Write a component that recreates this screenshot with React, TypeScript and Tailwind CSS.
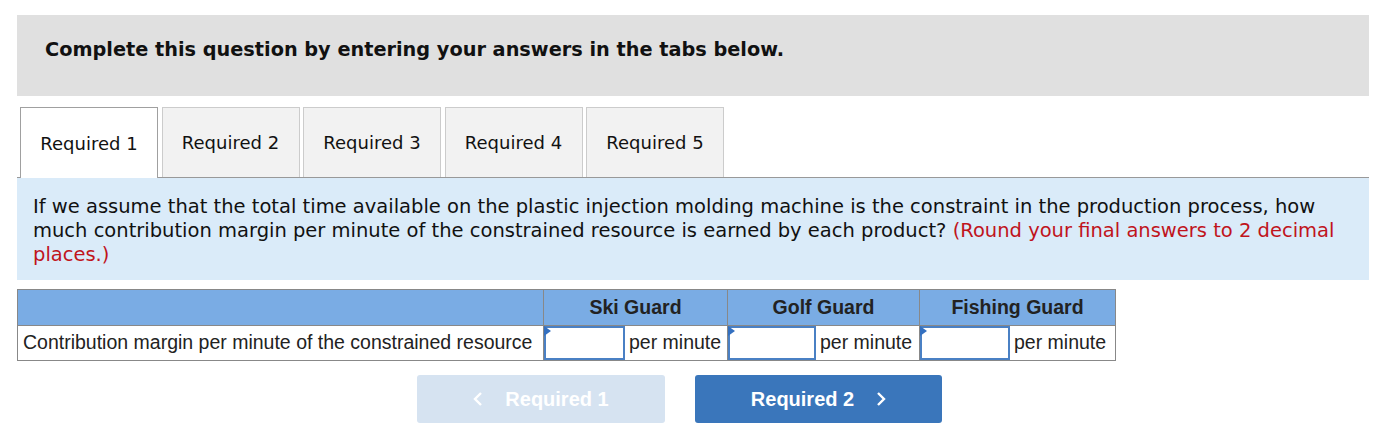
const verdana = { fontFamily: '"DejaVu Sans", Verdana, sans-serif' }

function Tab({ label, active }: { label: string; active?: boolean }) {
    return (
        <div
            className={
                active
                    ? 'w-[138px] h-[71px] flex items-center justify-center bg-white border border-b-0 border-[#a0a0a0] text-[18px] text-[#111] relative z-10 -mb-px'
                    : 'w-[138px] h-[70px] flex items-center justify-center bg-[#f2f2f2] border border-b-0 border-[#cccccc] text-[18px] text-[#111]'
            }
            style={verdana}
        >
            {label}
        </div>
    )
}

function AnswerInput({ width }: { width: string }) {
    return (
        <div className={`${width} h-[34px] relative border-2 border-[#4a80c4] bg-white`}>
            <div className="absolute -top-[2px] -left-[2px] w-[7px] h-[10px] bg-[#3470c0] [clip-path:polygon(0_0,100%_50%,0_100%)]" />
        </div>
    )
}

function Cell({ input }: { input: string }) {
    return (
        <div className="flex items-stretch border-l border-[#888]">
            <AnswerInput width={input} />
            <div className="flex-1 flex items-center pl-[4px] text-[19.5px] text-[#222]">per minute</div>
        </div>
    )
}

export default function App() {
    return (
        <div className="bg-white w-[1374px] h-[447px] pt-[15px] pl-[17px]" style={{ fontFamily: '"Liberation Sans", Arial, sans-serif' }}>
            <div className="w-[1352px] h-[81px] bg-[#e0e0e0] pl-[28px] pt-[21px]">
                <div className="font-bold text-[19.3px] text-[#111]" style={verdana}>
                    Complete this question by entering your answers in the tabs below.
                </div>
            </div>

            <div className="flex gap-[3.5px] mt-[11px] pl-[3px] items-end">
                <Tab label="Required 1" active />
                <Tab label="Required 2" />
                <Tab label="Required 3" />
                <Tab label="Required 4" />
                <Tab label="Required 5" />
            </div>

            <div className="w-[1352px] h-[103px] bg-[#daebf9] border-t border-[#999] pl-[16px] pr-[20px] pt-[17px]">
                <p className="text-[19.5px] leading-[24px] text-[#111]" style={verdana}>
                    If we assume that the total time available on the plastic injection molding machine is the constraint in the production process, how much contribution margin per minute of the constrained resource is earned by each product?{' '}
                    <span className="text-[#c0141c]">(Round your final answers to 2 decimal places.)</span>
                </p>
            </div>

            <div className="mt-[9px] w-[1099px] border border-[#888]">
                <div className="grid grid-cols-[525px_184px_192px_196px] h-[36px] bg-[#7aace4] border-b border-[#888] text-[19.5px] font-bold text-[#222]">
                    <div />
                    <div className="border-l border-[#888] flex items-center justify-center">Ski Guard</div>
                    <div className="border-l border-[#888] flex items-center justify-center">Golf Guard</div>
                    <div className="border-l border-[#888] flex items-center justify-center">Fishing Guard</div>
                </div>
                <div className="grid grid-cols-[525px_184px_192px_196px] h-[34px] bg-white">
                    <div className="flex items-center pl-[5px] text-[19.5px] text-[#222] whitespace-nowrap">
                        Contribution margin per minute of the constrained resource
                    </div>
                    <Cell input="w-[81px]" />
                    <Cell input="w-[88px]" />
                    <Cell input="w-[90px]" />
                </div>
            </div>

            <div className="flex gap-[30px] mt-[14px] ml-[400px]">
                <button className="w-[248px] h-[48px] rounded-[3px] bg-[#d6e3f1] text-white font-bold text-[20px] flex items-center justify-center gap-[22px]">
                    <svg width="10" height="16" viewBox="0 0 10 16" fill="none" stroke="white" strokeWidth="2.4">
                        <path d="M8 2 L2 8 L8 14" />
                    </svg>
                    Required 1
                </button>
                <button className="w-[247px] h-[48px] rounded-[3px] bg-[#3a76bb] text-white font-bold text-[20px] flex items-center justify-center gap-[22px]">
                    Required 2
                    <svg width="10" height="16" viewBox="0 0 10 16" fill="none" stroke="white" strokeWidth="2.4">
                        <path d="M2 2 L8 8 L2 14" />
                    </svg>
                </button>
            </div>
        </div>
    )
}
